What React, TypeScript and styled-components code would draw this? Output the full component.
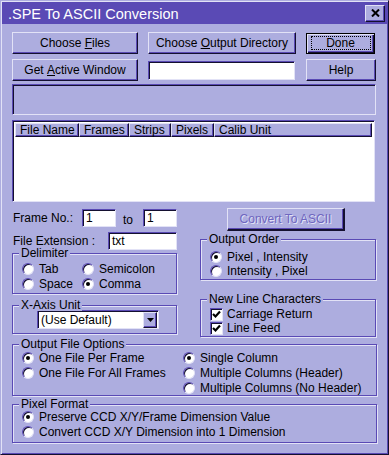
import React from "react";
import styled, { createGlobalStyle, css } from "styled-components";

const C = {
  bg: "#adaddf",
  title: "#5a4ab5",
  shadow: "#5a4ab5",
  light: "#e2e2f6",
  dark: "#141030",
  white: "#ffffff",
  disabled: "#6e66bf",
};

const GlobalStyle = createGlobalStyle`
  html, body { margin: 0; padding: 0; background: ${C.bg}; }
  body { font-family: "Liberation Sans", Arial, sans-serif; font-size: 12px; color: #000; }
  * { box-sizing: border-box; }
`;

const raised = css`
  background: ${C.bg};
  border: 1px solid;
  border-color: ${C.light} ${C.dark} ${C.dark} ${C.light};
  box-shadow: inset -1px -1px 0 ${C.shadow};
`;

const sunken = css`
  border: 1px solid;
  border-color: ${C.shadow} ${C.light} ${C.light} ${C.shadow};
  box-shadow: inset 1px 1px 0 ${C.dark};
`;

const Window = styled.div`
  width: 389px;
  height: 455px;
  background: ${C.bg};
  border: 1px solid;
  border-color: ${C.bg} ${C.dark} ${C.dark} ${C.bg};
  box-shadow: inset 1px 1px 0 ${C.light}, inset -1px -1px 0 ${C.shadow};
  padding: 1px;
  display: flex;
  flex-direction: column;
  overflow: hidden;
`;

const TitleBar = styled.div`
  height: 22px;
  flex: none;
  background: ${C.title};
  display: flex;
  align-items: center;
  justify-content: space-between;
  padding: 0 2px 0 6px;
`;

const TitleText = styled.span`
  color: #fff;
  font-size: 14.5px;
  line-height: 16px;
  padding-top: 1px;
  white-space: nowrap;
`;

const CloseButton = styled.div`
  ${raised};
  width: 20px;
  height: 17px;
  display: flex;
  align-items: center;
  justify-content: center;
`;

const Body = styled.div`
  display: flex;
  flex-direction: column;
  padding: 8px 10px 0 10px;
`;

const TopGrid = styled.div`
  display: grid;
  grid-template-columns: 126px 148px 70px;
  grid-template-rows: 22px 22px auto;
  column-gap: 10px;
  row-gap: 5px;
`;

const Button = styled.div<{ $w?: number; $h?: number }>`
  ${raised};
  width: ${(p) => (p.$w ? `${p.$w}px` : "100%")};
  height: ${(p) => (p.$h ? `${p.$h}px` : "100%")};
  display: flex;
  align-items: center;
  justify-content: center;
  white-space: nowrap;
  line-height: 14px;
`;

const DefaultButton = styled.div`
  align-self: end;
  width: 69px;
  height: 21px;
  background: ${C.bg};
  border: 1px solid #000;
  box-shadow: inset 1px 1px 0 ${C.light}, inset -1px -1px 0 ${C.dark}, inset -2px -2px 0 ${C.shadow};
  display: flex;
  align-items: center;
  justify-content: center;
  padding-bottom: 1px;
`;

const FocusRect = styled.span`
  width: 60px;
  height: 14px;
  border: 1px dotted #000;
  display: flex;
  align-items: center;
  justify-content: center;
  line-height: 12px;
`;

const DisabledButton = styled(Button)`
  color: ${C.disabled};
  text-shadow: 1px 1px 0 ${C.light};
  margin-left: 27px;
  border-right-width: 2px;
  border-bottom-width: 2px;
`;

const TextBox = styled.div<{ $w: number; $h?: number }>`
  ${sunken};
  background: #fff;
  width: ${(p) => p.$w}px;
  height: ${(p) => p.$h ?? 18}px;
  padding: 1px 3px 0;
  line-height: 15px;
  align-self: center;
  flex: none;
`;

const StatusPanel = styled.div`
  ${sunken};
  grid-column: 1 / -1;
  height: 31px;
  margin-top: -2px;
`;

const ListView = styled.div`
  ${sunken};
  background: #fff;
  width: 363px;
  height: 82px;
  margin-top: 5px;
  padding: 2px 2px 0 2px;
`;

const HeaderRow = styled.div`
  display: flex;
  height: 14px;
`;

const HeaderCell = styled.div<{ $w?: number }>`
  ${raised};
  ${(p) => (p.$w ? `width: ${p.$w}px; flex: none;` : "flex: 1;")}
  height: 14px;
  padding-left: 4px;
  line-height: 12px;
  white-space: nowrap;
`;

const Columns = styled.div`
  display: flex;
  align-items: flex-start;
  margin-top: 6px;
`;

const LeftCol = styled.div`
  width: 165px;
  display: flex;
  flex-direction: column;
  padding-top: 1px;
`;

const RightCol = styled.div`
  width: 176px;
  margin-left: 23px;
  display: flex;
  flex-direction: column;
`;

const FieldRow = styled.div<{ $mt?: number }>`
  display: flex;
  align-items: center;
  height: 18px;
  line-height: 13px;
  margin-top: ${(p) => p.$mt ?? 0}px;
`;

const FieldLabel = styled.span<{ $w: number }>`
  width: ${(p) => p.$w}px;
  padding-left: 1px;
  white-space: nowrap;
  flex: none;
`;

const ToText = styled.span`
  margin: 4px 10px 0 7px;
  width: 10px;
`;

const Group = styled.div<{ $mt?: number; $pt: number; $pb: number; $pl?: number }>`
  position: relative;
  margin-top: ${(p) => p.$mt ?? 0}px;
  border: 1px solid ${C.shadow};
  box-shadow: inset 1px 1px 0 ${C.light}, 1px 1px 0 ${C.light};
  padding: ${(p) => p.$pt}px 0 ${(p) => p.$pb}px ${(p) => p.$pl ?? 9}px;
`;

const GroupLabel = styled.span`
  position: absolute;
  top: -7px;
  left: 6px;
  padding: 0 2px;
  background: ${C.bg};
  line-height: 12px;
  white-space: nowrap;
`;

const OptionGrid = styled.div<{ $cols: string; $row: number }>`
  display: grid;
  grid-template-columns: ${(p) => p.$cols};
  grid-auto-rows: ${(p) => p.$row}px;
`;

const OptionColumns = styled.div`
  display: flex;
`;

const OptionColumn = styled.div<{ $w?: number; $row: number }>`
  display: grid;
  grid-auto-rows: ${(p) => p.$row}px;
  ${(p) => (p.$w ? `width: ${p.$w}px;` : "")}
`;

const Option = styled.label`
  display: flex;
  align-items: center;
  white-space: nowrap;
`;

const RadioCircle = styled.span<{ $checked?: boolean }>`
  position: relative;
  flex: none;
  width: 12px;
  height: 12px;
  border-radius: 50%;
  background: #fff;
  border: 1px solid;
  border-color: ${C.shadow} ${C.light} ${C.light} ${C.shadow};
  box-shadow: inset 1px 1px 0 ${C.dark};
  margin-right: 5px;
  &::after {
    content: "";
    display: ${(p) => (p.$checked ? "block" : "none")};
    position: absolute;
    left: 3px;
    top: 3px;
    width: 4px;
    height: 4px;
    border-radius: 50%;
    background: #000;
  }
`;

const CheckBox = styled.span`
  ${sunken};
  flex: none;
  width: 13px;
  height: 13px;
  background: #fff;
  margin-right: 4px;
  display: flex;
  align-items: center;
  justify-content: center;
`;

const Combo = styled.div`
  ${sunken};
  background: #fff;
  width: 122px;
  height: 19px;
  margin-left: 15px;
  display: flex;
  align-items: center;
  justify-content: space-between;
  padding: 0 1px 0 3px;
`;

const ComboButton = styled.span`
  ${raised};
  width: 14px;
  height: 16px;
  display: flex;
  align-items: center;
  justify-content: center;
`;

const Radio = ({ label, checked }: { label: string; checked?: boolean }) => (
  <Option>
    <RadioCircle $checked={checked} />
    {label}
  </Option>
);

const Check = ({ label }: { label: string }) => (
  <Option>
    <CheckBox>
      <svg width="9" height="9" viewBox="0 0 9 9">
        <polyline points="1,4 3.5,6.5 8,1.5" fill="none" stroke="#000" strokeWidth="2.2" />
      </svg>
    </CheckBox>
    {label}
  </Option>
);

export default function App() {
  return (
    <>
      <GlobalStyle />
      <Window>
        <TitleBar>
          <TitleText>.SPE To ASCII Conversion</TitleText>
          <CloseButton>
            <svg width="9" height="8" viewBox="0 0 9 8">
              <path d="M1 0.5 L8 7.5 M8 0.5 L1 7.5" stroke="#000" strokeWidth="2" />
            </svg>
          </CloseButton>
        </TitleBar>
        <Body>
          <TopGrid>
            <Button>
              Choose&nbsp;<u>F</u>iles
            </Button>
            <Button>
              Choose&nbsp;<u>O</u>utput Directory
            </Button>
            <DefaultButton>
              <FocusRect>Done</FocusRect>
            </DefaultButton>
            <Button>
              Get&nbsp;<u>A</u>ctive Window
            </Button>
            <TextBox $w={147} $h={19} />
            <Button>Help</Button>
            <StatusPanel />
          </TopGrid>
          <ListView>
            <HeaderRow>
              <HeaderCell $w={64}>File Name</HeaderCell>
              <HeaderCell $w={50}>Frames</HeaderCell>
              <HeaderCell $w={42}>Strips</HeaderCell>
              <HeaderCell $w={43}>Pixels</HeaderCell>
              <HeaderCell>Calib Unit</HeaderCell>
            </HeaderRow>
          </ListView>
          <Columns>
            <LeftCol>
              <FieldRow>
                <FieldLabel $w={70}>Frame No.:</FieldLabel>
                <TextBox $w={34}>1</TextBox>
                <ToText>to</ToText>
                <TextBox $w={34}>1</TextBox>
              </FieldRow>
              <FieldRow $mt={5}>
                <FieldLabel $w={96}>File Extension :</FieldLabel>
                <TextBox $w={69}>txt</TextBox>
              </FieldRow>
              <Group $mt={3} $pt={7} $pb={2}>
                <GroupLabel>Delimiter</GroupLabel>
                <OptionGrid $cols="60px 1fr" $row={15}>
                  <Radio label="Tab" />
                  <Radio label="Semicolon" />
                  <Radio label="Space" />
                  <Radio label="Comma" checked />
                </OptionGrid>
              </Group>
              <Group $mt={11} $pt={4} $pb={4}>
                <GroupLabel>X-Axis Unit</GroupLabel>
                <Combo>
                  (Use Default)
                  <ComboButton>
                    <svg width="7" height="4" viewBox="0 0 7 4">
                      <path d="M0 0 H7 L3.5 4 Z" fill="#000" />
                    </svg>
                  </ComboButton>
                </Combo>
              </Group>
            </LeftCol>
            <RightCol>
              <DisabledButton $w={118} $h={23}>
                Convert To ASCII
              </DisabledButton>
              <Group $mt={8} $pt={10} $pb={1}>
                <GroupLabel>Output Order</GroupLabel>
                <OptionColumn $row={14}>
                  <Radio label="Pixel , Intensity" checked />
                  <Radio label="Intensity , Pixel" />
                </OptionColumn>
              </Group>
              <Group $mt={19} $pt={7} $pb={1}>
                <GroupLabel>New Line Characters</GroupLabel>
                <OptionColumn $row={14}>
                  <Check label="Carriage Return" />
                  <Check label="Line Feed" />
                </OptionColumn>
              </Group>
            </RightCol>
          </Columns>
          <Group $mt={7} $pt={5} $pb={0}>
            <GroupLabel>Output File Options</GroupLabel>
            <OptionColumns>
              <OptionColumn $w={161} $row={15}>
                <Radio label="One File Per Frame" checked />
                <Radio label="One File For All Frames" />
              </OptionColumn>
              <OptionColumn $row={15}>
                <Radio label="Single Column" checked />
                <Radio label="Multiple Columns (Header)" />
                <Radio label="Multiple Columns (No Header)" />
              </OptionColumn>
            </OptionColumns>
          </Group>
          <Group $mt={8} $pt={4} $pb={3}>
            <GroupLabel>Pixel Format</GroupLabel>
            <OptionColumn $row={15}>
              <Radio label="Preserve CCD X/Y/Frame Dimension Value" checked />
              <Radio label="Convert CCD X/Y Dimension into 1 Dimension" />
            </OptionColumn>
          </Group>
        </Body>
      </Window>
    </>
  );
}
